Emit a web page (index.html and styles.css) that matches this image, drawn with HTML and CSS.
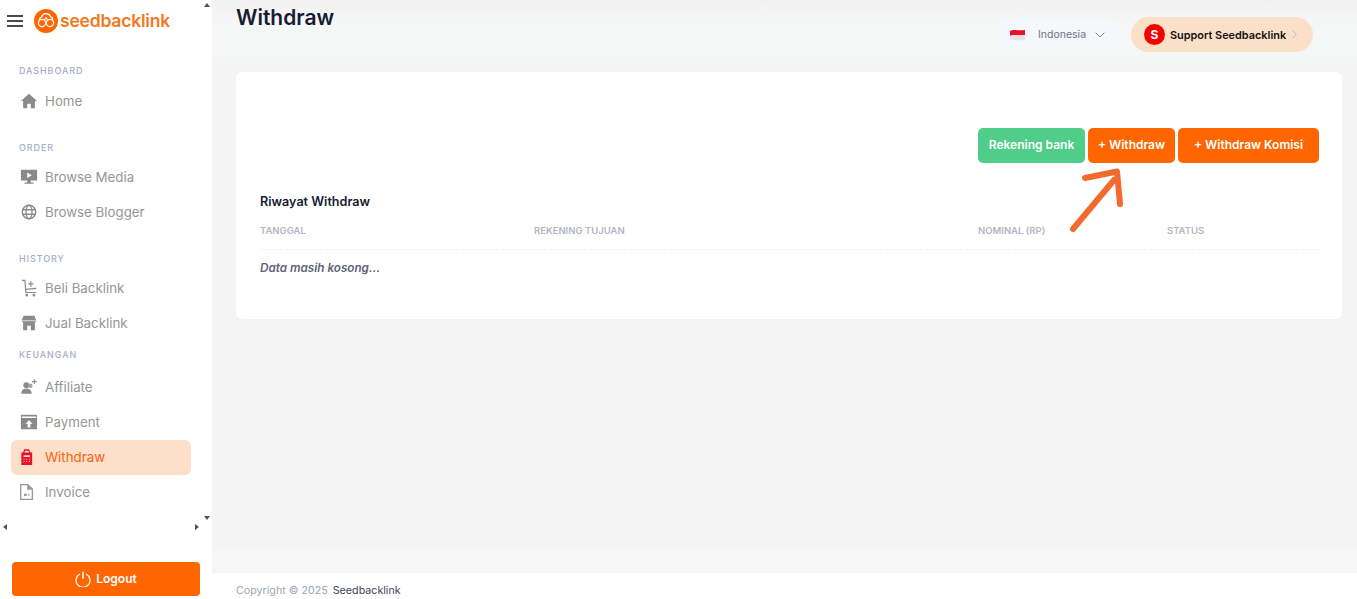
FILE: index.html
```html
<!DOCTYPE html>
<html lang="en">
<head>
    <meta charset="UTF-8">
    <meta name="viewport" content="width=device-width, initial-scale=1.0">
    <title>Withdraw</title>
    <link rel="stylesheet" href="styles.css">
</head>
<body>

<div class="page">
    <aside class="sidebar">
        <div class="brand">
            <svg class="burger" viewBox="0 0 16 12"><path d="M0 1h16M0 6h16M0 11h16" stroke="#111" stroke-width="1.4"/></svg>
            <svg class="logo-mark" viewBox="0 0 24 24">
                <circle cx="12" cy="12" r="12" fill="#ff6600"/>
                <path d="M5.500 11a3 3 0 0 1 2-3 4.800 4.800 0 0 1 9-.5 3 3 0 0 1 2 3.500" fill="none" stroke="#fff" stroke-width="1.200"/>
                <circle cx="8" cy="14" r="3.600" fill="none" stroke="#fff" stroke-width="1.200"/>
                <circle cx="16" cy="14" r="3.600" fill="none" stroke="#fff" stroke-width="1.200"/>
                <path d="M10 11.500 12 8.500l2 3" fill="none" stroke="#fff" stroke-width="1.200"/>
            </svg>
            <span class="logo-text">seedbacklink</span>
        </div>

        <nav class="menu">
            <div class="menu-label">Dashboard</div>
            <a class="menu-item">
                <svg class="menu-icon" viewBox="0 0 20 20"><path d="M10 2 1 10h2.500v8h4.500v-5h4v5h4.500v-8H19z" fill="#8a8a8a"/></svg>
                Home
            </a>

            <div class="menu-label gap-big">Order</div>
            <a class="menu-item">
                <svg class="menu-icon" viewBox="0 0 20 20"><path fill-rule="evenodd" d="M2 2h16a1 1 0 0 1 1 1v10a1 1 0 0 1-1 1h-6v2h3v1.500H5V16h3v-2H2a1 1 0 0 1-1-1V3a1 1 0 0 1 1-1zm6 3v6l5-3z" fill="#8a8a8a"/></svg>
                Browse Media
            </a>
            <a class="menu-item">
                <svg class="menu-icon" viewBox="0 0 20 20" fill="none" stroke="#8a8a8a" stroke-width="1.500"><circle cx="10" cy="10" r="7.500"/><ellipse cx="10" cy="10" rx="3.300" ry="7.500"/><path d="M2.500 7.500h15M2.500 12.500h15"/></svg>
                Browse Blogger
            </a>

            <div class="menu-label gap-big">History</div>
            <a class="menu-item">
                <svg class="menu-icon" viewBox="0 0 20 20" fill="none" stroke="#8a8a8a" stroke-width="1.300"><path d="M2 1.500h3.500L6.500 15h11.500M6.300 11.500l11.700-1"/><path d="M12 2.500v6M9 5.500h6"/><circle cx="7.500" cy="18" r=".9" fill="#8a8a8a"/><circle cx="15.500" cy="18" r=".9" fill="#8a8a8a"/></svg>
                Beli Backlink
            </a>
            <a class="menu-item">
                <svg class="menu-icon" viewBox="0 0 20 20"><path d="M4 2h12l2 5a2.200 2.200 0 0 1-1.500 2.500V18H12v-5H8v5H3.500V9.500A2.200 2.200 0 0 1 2 7z" fill="#8a8a8a"/><path d="M2 7.500h16" stroke="#fff" stroke-width=".8"/></svg>
                Jual Backlink
            </a>

            <div class="menu-label gap-small">Keuangan</div>
            <a class="menu-item">
                <svg class="menu-icon" viewBox="0 0 20 20"><circle cx="7" cy="8" r="3.300" fill="#8a8a8a"/><circle cx="11.500" cy="8.500" r="2.500" fill="#a5a5a5"/><path d="M1.500 17.500c0-4 2-5.500 5.500-5.500s6 1.500 6 5.500z" fill="#8a8a8a"/><path d="M16 1.500v5M13.500 4h5" stroke="#8a8a8a" stroke-width="1.400"/></svg>
                Affiliate
            </a>
            <a class="menu-item">
                <svg class="menu-icon" viewBox="0 0 20 20"><path fill-rule="evenodd" d="M2 2h16a1 1 0 0 1 1 1v14a1 1 0 0 1-1 1H2a1 1 0 0 1-1-1V3a1 1 0 0 1 1-1zm0 2v1.500h16V4zm8 4-4 4h2.500v4h3v-4H14z" fill="#8a8a8a"/></svg>
                Payment
            </a>
            <a class="menu-item active">
                <svg class="menu-icon" viewBox="2.500 0 20 20"><path fill-rule="evenodd" d="M4 5h2l1-3.500h5.500L14 5h2v14H4zm3.500 0h5l-.6-2H8.100zM6.500 8v2h7V8zm0 4v1h1v-1zm3 0v1h1v-1zm3 0v1h1v-1zm-6 2.500v1h1v-1zm3 0v1h1v-1zm3 0v1h1v-1z" fill="#e8112d"/></svg>
                Withdraw
            </a>
            <a class="menu-item">
                <svg class="menu-icon" viewBox="3 0 20 20"><path fill-rule="evenodd" d="M3 1h9l5.500 5.500V19H3zm1.500 1.500v15h11.500V7.500h-5v-5zm3 9.500h3v2.500h-3zm4.500 0h1.500v1h-1.500zm0 1.500h1.500v1h-1.500z" fill="#9a9a9a"/></svg>
                Invoice
            </a>
        </nav>

        <span class="scroll-arrow arrow-up"></span>
        <span class="scroll-arrow arrow-down"></span>
        <span class="scroll-arrow arrow-left"></span>
        <span class="scroll-arrow arrow-right"></span>

        <button class="logout-btn">
            <svg class="logout-icon" viewBox="0 0 16 16" fill="none" stroke="#fff" stroke-width="1.200"><path d="M5 3a7 7 0 1 0 6 0"/><path d="M8 .8v7" stroke-width="1.600"/></svg>
            Logout
        </button>
    </aside>

    <div class="main">
        <header class="topbar">
            <h1 class="page-title">Withdraw</h1>
            <div class="topbar-right">
                <div class="lang">
                    <svg class="flag" viewBox="0 0 15 12"><path d="M0 2c3-2 6 0 15-1v5C8 7 4 5 0 7z" fill="#e8112d"/><path d="M0 7c4-2 8 0 15-1v5c-7 1-11-1-15 0z" fill="#e3e3e3"/></svg>
                    <span class="lang-name">Indonesia</span>
                    <svg class="chevron" viewBox="0 0 10 6" fill="none" stroke="#7e8299" stroke-width="1"><path d="M.7.7 5 5 9.300.7"/></svg>
                </div>
                <div class="support">
                    <span class="support-badge">S</span>
                    <span class="support-text">Support Seedbacklink</span>
                    <svg class="support-arrow" viewBox="0 0 5 9" fill="none" stroke="#b5b5c3" stroke-width="1"><path d="m.7.7 3.500 3.800L.7 8.300"/></svg>
                </div>
            </div>
        </header>

        <section class="content">
            <div class="card">
                <div class="actions">
                    <button class="btn btn-green">Rekening bank</button>
                    <button class="btn btn-orange btn-withdraw">+ Withdraw</button>
                    <button class="btn btn-orange btn-komisi">+ Withdraw Komisi</button>
                </div>
                <svg class="pointer" viewBox="0 0 60 70" fill="none" stroke="#f26a2e" stroke-width="6" stroke-linecap="round" stroke-linejoin="round">
                    <path d="M5 61 46 12"/>
                    <path d="M17 10 49 3.500l3 32.500"/>
                </svg>
                <h2 class="card-title">Riwayat Withdraw</h2>
                <table class="history">
                    <thead>
                        <tr>
                            <th class="col-date">Tanggal</th>
                            <th class="col-bank">Rekening Tujuan</th>
                            <th class="col-amount">Nominal (Rp)</th>
                            <th>Status</th>
                        </tr>
                    </thead>
                    <tbody>
                        <tr>
                            <td colspan="4">Data masih kosong...</td>
                        </tr>
                    </tbody>
                </table>
            </div>
        </section>

        <footer class="footer">
            <span class="copyright">Copyright © 2025</span>
            <span class="footer-brand">Seedbacklink</span>
        </footer>
    </div>
</div>

</body>
</html>
```

FILE: styles.css
```css
* {
    box-sizing: border-box;
}

html, body {
    margin: 0;
    height: 100%;
}

body {
    font-family: Inter, "Liberation Sans", sans-serif;
    background-color: #f3f3f3;
    overflow: hidden;
}

.page {
    display: flex;
    height: 599px;
}

/* Styles for the sidebar */
.sidebar {
    position: relative;
    flex: 0 0 212px;
    display: flex;
    flex-direction: column;
    background-color: #fff;
}

.brand {
    display: flex;
    align-items: center;
    height: 40px;
    padding: 2px 0 0 7px;
}

.burger {
    width: 16px;
    height: 12px;
    margin-right: 11px;
}

.logo-mark {
    width: 24px;
    height: 24px;
    margin-right: 2px;
}

.logo-text {
    margin-bottom: 2px;
    font-size: 17.500px;
    font-weight: 600;
    color: #f5781f;
    letter-spacing: -0.2px;
}

.menu {
    display: flex;
    flex-direction: column;
    padding: 24px 21px 0 11px;
}

.menu-label {
    height: 14px;
    margin: 0 0 6px 8px;
    font-size: 9px;
    line-height: 14px;
    font-weight: 500;
    letter-spacing: 0.9px;
    text-transform: uppercase;
    color: #a8adc4;
}

.gap-big {
    margin-top: 22px;
    margin-bottom: 5px;
}

.gap-small {
    margin-top: 7px;
    margin-bottom: 8px;
}

.menu-item {
    display: flex;
    align-items: center;
    height: 35px;
    padding: 0 0 1px 9px;
    font-size: 13.300px;
    color: #969696;
    border-radius: 6px;
}

.menu-item:last-child {
    height: 34px;
}

.menu-item.active {
    background-color: #fddfca;
    color: #f5650f;
}

.menu-icon {
    width: 18px;
    height: 18px;
    margin-right: 7px;
    flex-shrink: 0;
}

/* Little arrows of the scrollbars around the menu */
.scroll-arrow {
    position: absolute;
    width: 0;
    height: 0;
    border: 3px solid transparent;
}

.arrow-up {
    top: 0;
    left: 204px;
    border-bottom: 4px solid #50505f;
}

.arrow-down {
    top: 516px;
    left: 204px;
    border-top: 4px solid #50505f;
}

.arrow-left {
    top: 524px;
    left: 0;
    border-right: 4px solid #50505f;
}

.arrow-right {
    top: 524px;
    left: 195px;
    border-left: 4px solid #50505f;
}

.logout-btn {
    display: flex;
    align-items: center;
    justify-content: center;
    gap: 5px;
    width: 188px;
    height: 34px;
    margin: auto 0 3px 12px;
    padding-bottom: 2px;
    font-family: inherit;
    font-size: 12px;
    font-weight: 600;
    color: #fff;
    background-color: #ff6600;
    border: none;
    border-radius: 4px;
}

.logout-icon {
    width: 16px;
    height: 16px;
}

/* Styles for the main column */
.main {
    flex: 1;
    display: flex;
    flex-direction: column;
    min-width: 0;
}

.topbar {
    display: flex;
    justify-content: space-between;
    height: 72px;
    padding: 6px 44px 0 24px;
    background: linear-gradient(#f1f1f1, #f5f6f6 30%, #f5f6f6 80%, #f3f3f3);
}

.page-title {
    margin: 0;
    font-size: 21px;
    line-height: 24px;
    font-weight: 600;
    color: #181c32;
}

.topbar-right {
    display: flex;
    align-items: flex-start;
    gap: 14px;
    padding-top: 11px;
}

.lang {
    display: flex;
    align-items: center;
    width: 117px;
    height: 30px;
    margin-top: 3px;
    padding: 0 0 1px 10px;
    background-color: #f5f8fa;
    border-radius: 4px;
}

.flag {
    width: 15px;
    height: 12px;
    margin-right: 13px;
}

.lang-name {
    font-size: 10.500px;
    color: #6f7285;
}

.chevron {
    width: 10px;
    height: 6px;
    margin-left: 9px;
}

.support {
    display: flex;
    align-items: center;
    width: 182px;
    height: 35px;
    padding-left: 13px;
    background-color: #fbe0c8;
    border-radius: 18px;
}

.support-badge {
    display: flex;
    align-items: center;
    justify-content: center;
    width: 21px;
    height: 21px;
    margin-right: 5px;
    font-size: 12px;
    font-weight: 700;
    color: #fff;
    background-color: #f70000;
    border-radius: 50%;
}

.support-text {
    font-size: 10.900px;
    font-weight: 600;
    color: #111;
}

.support-arrow {
    width: 5px;
    height: 9px;
    margin-left: 6px;
}

.content {
    flex: 1;
    padding: 0 15px 0 24px;
    background: linear-gradient(#f3f3f3 calc(100% - 32px), #f6f6f6 calc(100% - 22px));
}

/* Styles for the card */
.card {
    position: relative;
    height: 247px;
    padding: 56px 23px 0 24px;
    background-color: #fff;
    border-radius: 6px;
}

.actions {
    display: flex;
    justify-content: flex-end;
    gap: 3px;
}

.btn {
    height: 35px;
    padding: 0 0 2px;
    font-family: inherit;
    font-size: 12px;
    font-weight: 600;
    color: #fff;
    border: none;
    border-radius: 5px;
}

.btn-green {
    width: 107px;
    background-color: #50cd89;
}

.btn-orange {
    background-color: #ff6600;
}

.btn-withdraw {
    width: 87px;
}

.btn-komisi {
    width: 141px;
}

.pointer {
    position: absolute;
    top: 96px;
    left: 832px;
    width: 60px;
    height: 70px;
}

.card-title {
    margin: 30px 0 0;
    font-size: 12.600px;
    line-height: 17px;
    font-weight: 600;
    color: #181c32;
}

.history {
    width: 100%;
    border-collapse: collapse;
    table-layout: fixed;
}

.history th {
    height: 39px;
    padding: 2px 0 0;
    font-size: 9.500px;
    font-weight: 600;
    text-align: left;
    text-transform: uppercase;
    color: #b5b5c3;
    border-bottom: 1px dashed #eff2f5;
}

.col-date {
    width: 274px;
}

.col-bank {
    width: 444px;
}

.col-amount {
    width: 189px;
}

.history td {
    height: 37px;
    padding: 0;
    font-size: 11.700px;
    font-weight: 600;
    font-style: italic;
    color: #5e6278;
}

/* Styles for the footer */
.footer {
    display: flex;
    align-items: center;
    gap: 5px;
    height: 26px;
    padding: 8px 0 0 24px;
    font-size: 10.700px;
    background-color: #fff;
}

.copyright {
    color: #a1a5b7;
}

.footer-brand {
    color: #3f4254;
}
```
